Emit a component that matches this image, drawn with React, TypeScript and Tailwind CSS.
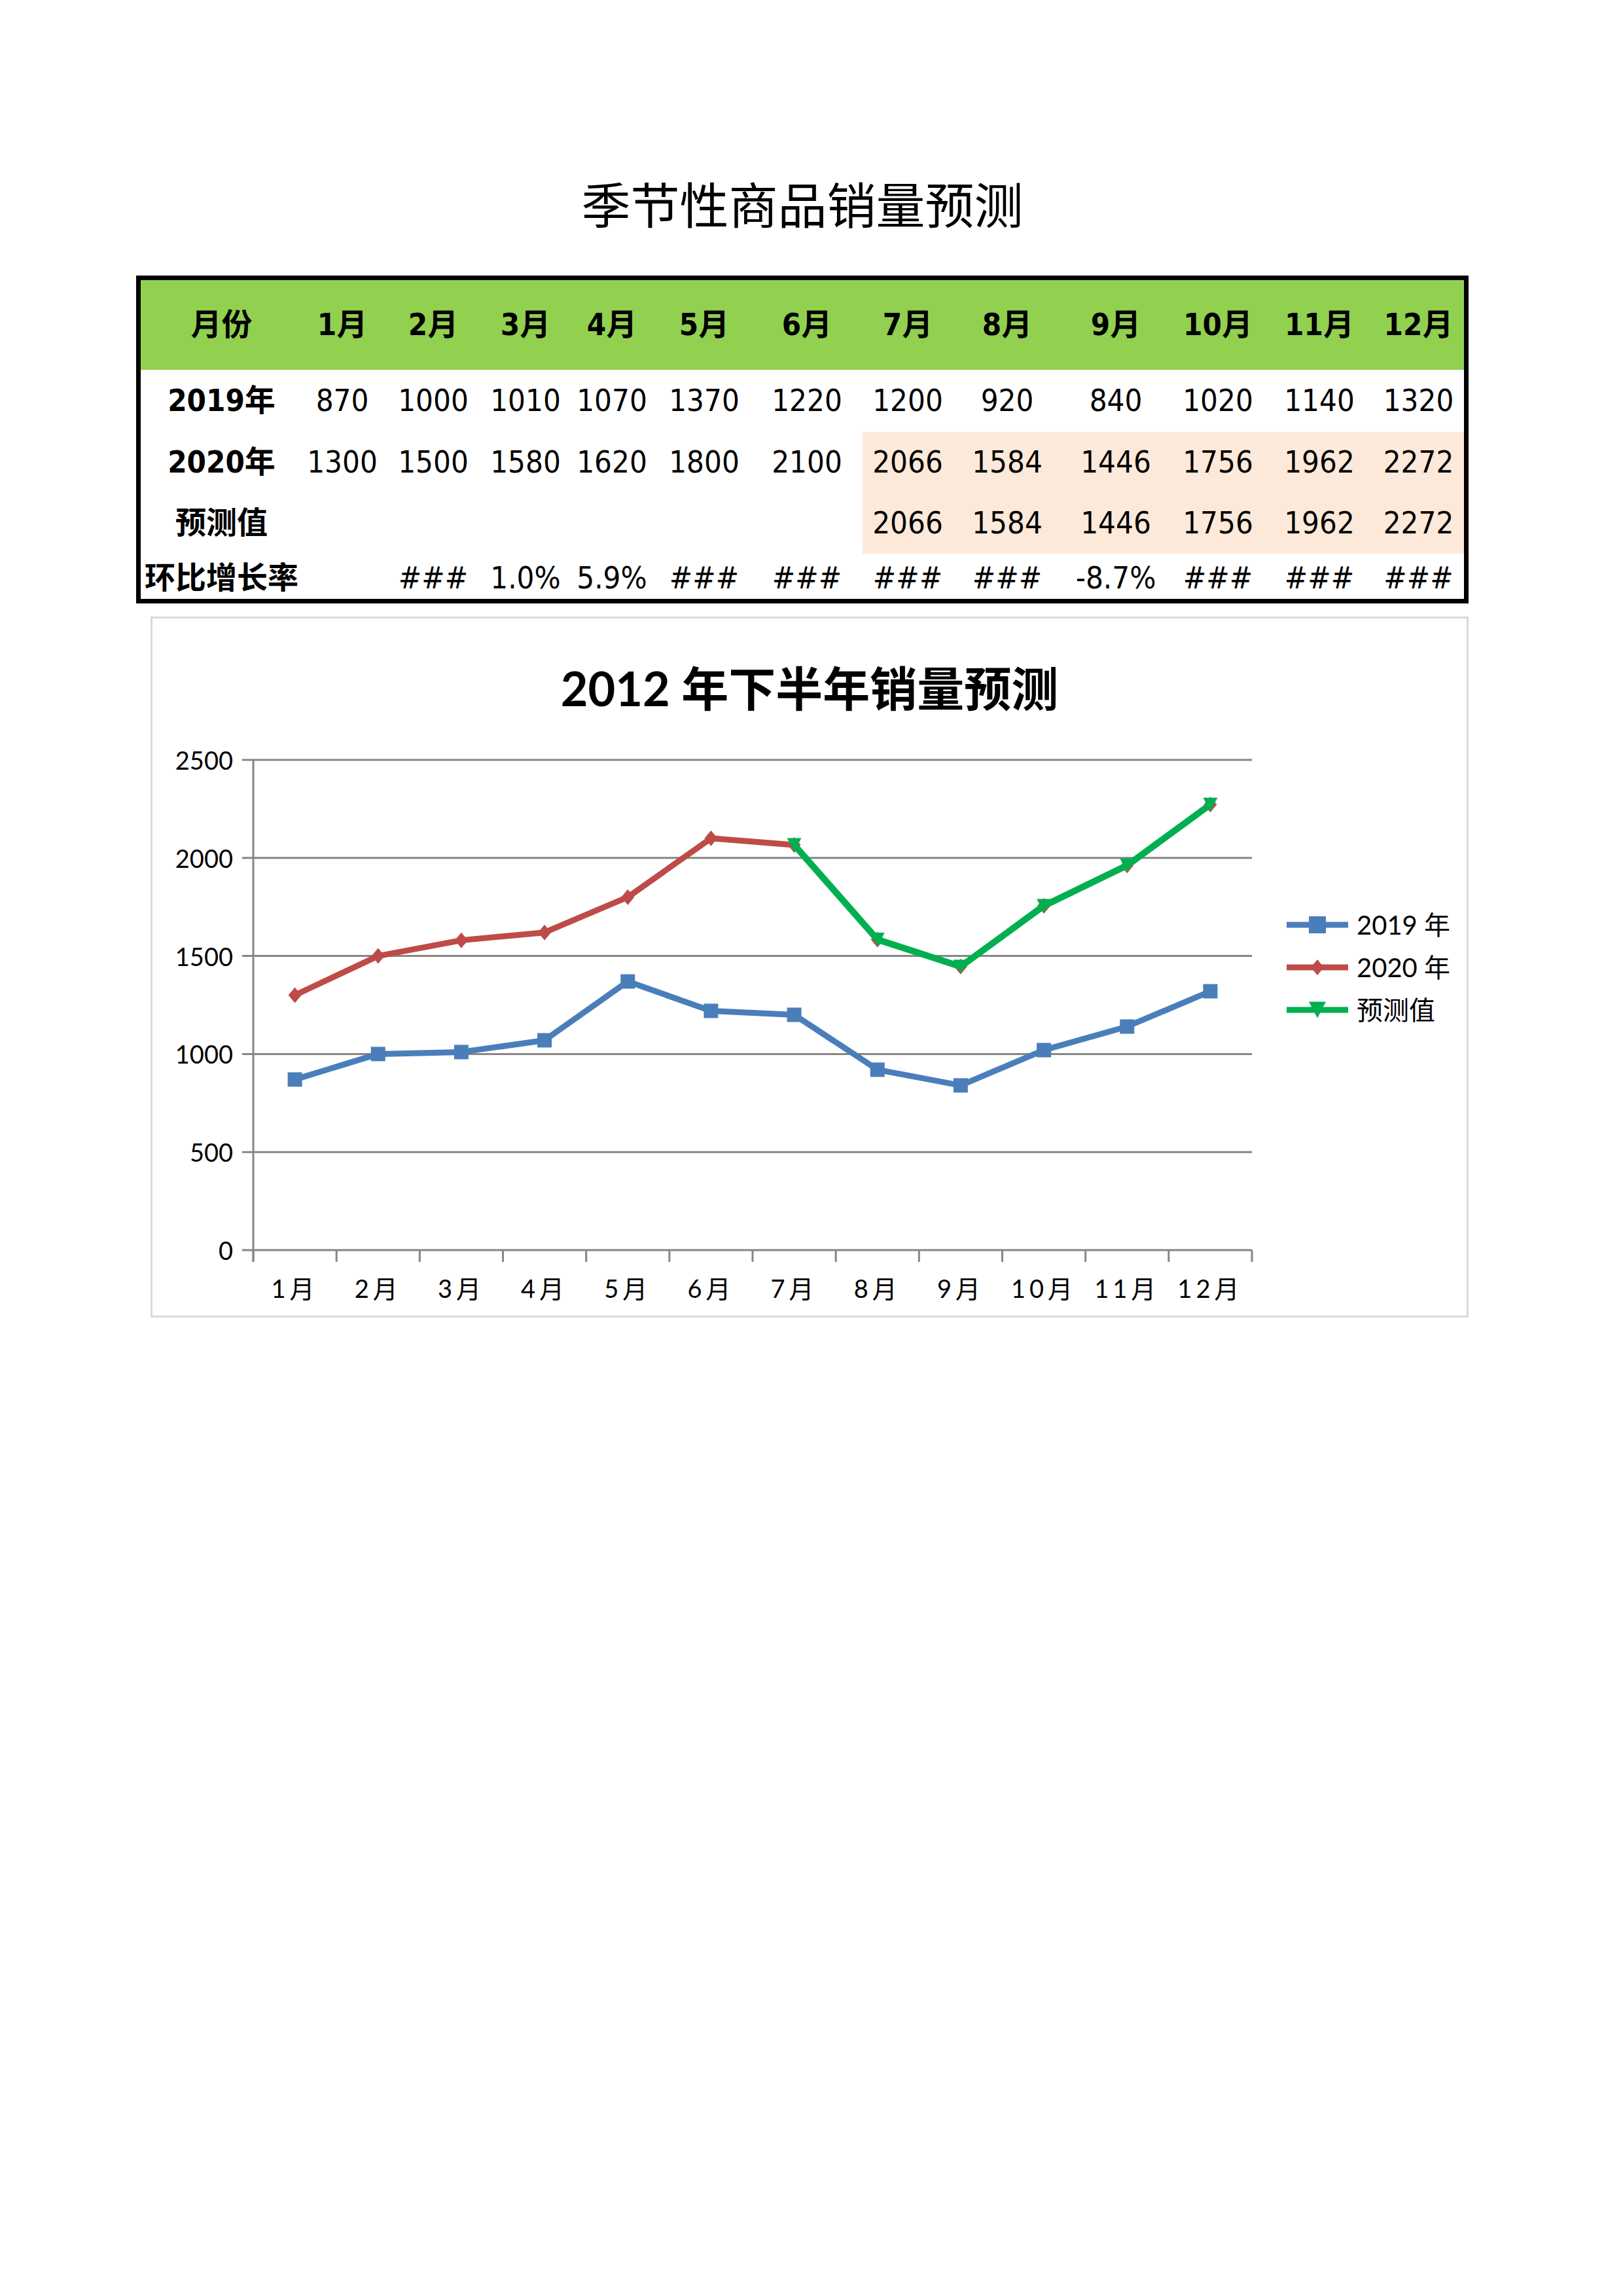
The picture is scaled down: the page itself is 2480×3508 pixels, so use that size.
const months = ["1月", "2月", "3月", "4月", "5月", "6月", "7月", "8月", "9月", "10月", "11月", "12月"];

const sales2019 = [870, 1000, 1010, 1070, 1370, 1220, 1200, 920, 840, 1020, 1140, 1320];
const sales2020 = [1300, 1500, 1580, 1620, 1800, 2100, 2066, 1584, 1446, 1756, 1962, 2272];
const forecast: (number | null)[] = [null, null, null, null, null, null, 2066, 1584, 1446, 1756, 1962, 2272];
const growth = ["", "###", "1.0%", "5.9%", "###", "###", "###", "###", "-8.7%", "###", "###", "###"];

const tableFont =
  "[font-family:'DejaVu_Sans_Condensed','DejaVu_Sans','Noto_Sans_CJK_SC',sans-serif] font-stretch-condensed";

function Cell({
  children,
  bold,
  peach,
  green,
  low,
}: {
  children?: React.ReactNode;
  bold?: boolean;
  peach?: boolean;
  green?: boolean;
  low?: boolean;
}) {
  return (
    <div
      className={`flex items-center justify-center whitespace-nowrap text-[47px] text-black ${
        bold ? "font-bold" : ""
      } ${peach ? "bg-[#fde9d9]" : ""} ${green ? "bg-[#92d050]" : ""} ${low ? "pt-[6px]" : ""}`}
    >
      {children}
    </div>
  );
}

function SalesTable() {
  return (
    <div
      className={`mt-[51px] grid h-[501px] w-[2036px] grid-cols-[247px_122px_156px_126px_138px_144px_170px_138px_166px_166px_146px_164px_139px] grid-rows-[137px_95px_93px_93px_69px] border-[7px] border-black ${tableFont}`}
    >
      <Cell bold green>
        月份
      </Cell>
      {months.map((m) => (
        <Cell key={m} bold green>
          {m}
        </Cell>
      ))}

      <Cell bold>2019年</Cell>
      {sales2019.map((v, i) => (
        <Cell key={i}>{v}</Cell>
      ))}

      <Cell bold>2020年</Cell>
      {sales2020.map((v, i) => (
        <Cell key={i} peach={i >= 6}>
          {v}
        </Cell>
      ))}

      <Cell bold>预测值</Cell>
      {forecast.map((v, i) => (
        <Cell key={i} peach={i >= 6}>
          {v ?? ""}
        </Cell>
      ))}

      <Cell bold low>
        环比增长率
      </Cell>
      {growth.map((v, i) => (
        <Cell key={i} low>
          {v}
        </Cell>
      ))}
    </div>
  );
}

// plot geometry (svg coordinates)
const axisX = 154;
const plotRight = 1680;
const zeroY = 775;
const perUnit = 749 / 2500;
const catW = (plotRight - axisX) / 12;

const px = (i: number) => axisX + catW * (i + 0.5);
const py = (v: number) => zeroY - v * perUnit;

const BLUE = "#4a7ebb";
const RED = "#be4b48";
const GREEN = "#00b050";

function Square({ x, y, s = 22 }: { x: number; y: number; s?: number }) {
  return <rect x={x - s / 2} y={y - s / 2} width={s} height={s} fill={BLUE} />;
}

function Diamond({ x, y, w = 20, h = 24 }: { x: number; y: number; w?: number; h?: number }) {
  return (
    <polygon
      points={`${x},${y - h / 2} ${x + w / 2},${y} ${x},${y + h / 2} ${x - w / 2},${y}`}
      fill={RED}
    />
  );
}

function Triangle({ x, y, w = 22, h = 21 }: { x: number; y: number; w?: number; h?: number }) {
  return (
    <polygon
      points={`${x - w / 2},${y - h / 2} ${x + w / 2},${y - h / 2} ${x},${y + h / 2}`}
      fill={GREEN}
    />
  );
}

function Plot() {
  const ticks = [0, 500, 1000, 1500, 2000, 2500];
  const line = (vals: number[], start = 0) =>
    vals.map((v, i) => `${px(i + start)},${py(v)}`).join(" ");
  const fc = forecast.slice(6) as number[];

  return (
    <svg
      width={1700}
      height={875}
      className="shrink-0 [font-family:Lato,'Noto_Sans_CJK_SC',sans-serif]"
    >
      {ticks.map((t) => (
        <g key={t}>
          <line x1={axisX - 17} x2={plotRight} y1={py(t)} y2={py(t)} stroke="#868686" strokeWidth={3} />
          <text
            x={123}
            y={py(t)}
            textAnchor="end"
            dominantBaseline="central"
            fontSize={38}
            fill="#000"
          >
            {t}
          </text>
        </g>
      ))}
      <line x1={axisX} x2={axisX} y1={py(2500)} y2={zeroY + 18} stroke="#868686" strokeWidth={3} />
      {Array.from({ length: 13 }).map((_, k) => (
        <line
          key={k}
          x1={axisX + catW * k}
          x2={axisX + catW * k}
          y1={zeroY}
          y2={zeroY + 18}
          stroke="#868686"
          strokeWidth={3}
        />
      ))}
      {months.map((m, i) => (
        <text
          key={m}
          x={px(i)}
          y={833}
          textAnchor="middle"
          dominantBaseline="central"
          fontSize={38}
          letterSpacing={6}
          fill="#000"
        >
          {m}
        </text>
      ))}

      <polyline points={line(sales2019)} fill="none" stroke={BLUE} strokeWidth={9} strokeLinejoin="round" />
      {sales2019.map((v, i) => (
        <Square key={i} x={px(i)} y={py(v)} />
      ))}

      <polyline points={line(sales2020)} fill="none" stroke={RED} strokeWidth={9} strokeLinejoin="round" />
      {sales2020.map((v, i) => (
        <Diamond key={i} x={px(i)} y={py(v)} />
      ))}

      <polyline points={line(fc, 6)} fill="none" stroke={GREEN} strokeWidth={10} strokeLinejoin="round" />
      {fc.map((v, i) => (
        <Triangle key={i} x={px(i + 6)} y={py(v)} />
      ))}
    </svg>
  );
}

function LegendItem({ color, label, marker }: { color: string; label: string; marker: "square" | "diamond" | "triangle" }) {
  return (
    <div className="flex h-[65px] items-center gap-[13px]">
      <svg width={94} height={30} className="shrink-0">
        <line x1={0} x2={94} y1={15} y2={15} stroke={color} strokeWidth={9} />
        {marker === "square" && <Square x={47} y={15} s={26} />}
        {marker === "diamond" && <Diamond x={47} y={15} w={20} h={24} />}
        {marker === "triangle" && <Triangle x={47} y={15} w={26} h={25} />}
      </svg>
      <span className="whitespace-nowrap text-[40px] leading-none text-black">{label}</span>
    </div>
  );
}

function Chart() {
  return (
    <div className="ml-[22px] mt-[20px] flex h-[1071px] w-[2014px] flex-col border-[3px] border-[#d9d9d9] [font-family:Lato,'Noto_Sans_CJK_SC',sans-serif]">
      <div className="flex h-[190px] items-center justify-center pt-[22px] text-[72px] font-bold text-black">
        2012 年下半年销量预测
      </div>
      <div className="flex">
        <Plot />
        <div className="ml-[33px] flex flex-col pt-[245px]">
          <LegendItem color={BLUE} label="2019 年" marker="square" />
          <LegendItem color={RED} label="2020 年" marker="diamond" />
          <LegendItem color={GREEN} label="预测值" marker="triangle" />
        </div>
      </div>
    </div>
  );
}

export default function App() {
  return (
    <div className="h-[3508px] w-[2480px] bg-white pl-[208px] pt-[255px]">
      <div className="w-[2036px]">
        <h1 className="flex h-[110px] items-center justify-center text-[75px] font-normal text-black [font-family:'Noto_Sans_CJK_SC',sans-serif]">
          季节性商品销量预测
        </h1>
        <div className="h-[5px]" />
        <SalesTable />
      </div>
      <Chart />
    </div>
  );
}
